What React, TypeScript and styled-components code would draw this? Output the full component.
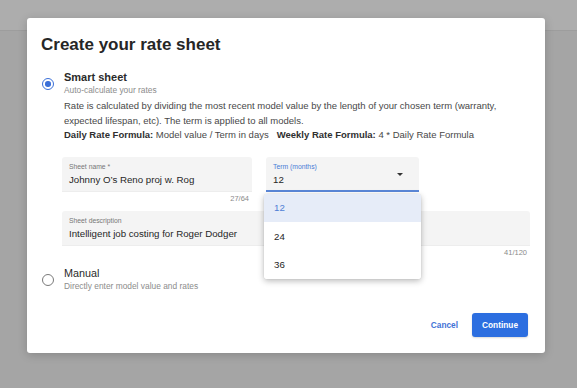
import React from "react";
import styled, { createGlobalStyle } from "styled-components";

const Global = createGlobalStyle`
  html, body { margin: 0; padding: 0; }
  body {
    width: 577px;
    height: 388px;
    overflow: hidden;
    background: #a5a5a5;
    font-family: "Liberation Sans", Arial, Helvetica, sans-serif;
  }
  * { box-sizing: border-box; }
`;

const Page = styled.div`
  position: relative;
  width: 577px;
  height: 388px;
  background: #a5a5a5;
`;

const AppBar = styled.div`
  height: 31px;
  background: #adadad;
  border-bottom: 1px solid #9d9d9d;
`;

const Overlay = styled.div`
  position: absolute;
  inset: 0;
  padding: 18px 32px 35px 27px;
  display: flex;
  align-items: flex-start;
`;

const Dialog = styled.div`
  width: 518px;
  height: 335px;
  background: #ffffff;
  border-radius: 3px;
  box-shadow: 0 2px 10px rgba(0, 0, 0, 0.18);
  padding: 16px 15px 16px 14px;
  display: flex;
  flex-direction: column;
  color: #2b2b2b;
`;

const Title = styled.h1`
  margin: 0;
  font-size: 17px;
  line-height: 22px;
  font-weight: bold;
  color: #262626;
`;

const Option = styled.section<{ $mt: number }>`
  margin-top: ${(p) => p.$mt}px;
  display: flex;
  flex-direction: column;
`;

const OptionHead = styled.div`
  display: flex;
  align-items: center;
  gap: 10px;
`;

const Radio = styled.span<{ $checked?: boolean }>`
  width: 12px;
  height: 12px;
  margin-left: 1px;
  border-radius: 50%;
  flex: none;
  border: 1.5px solid ${(p) => (p.$checked ? "#3a6fd8" : "#7a7a7a")};
  display: flex;
  align-items: center;
  justify-content: center;
  &::after {
    content: "";
    width: 5.5px;
    height: 5.5px;
    border-radius: 50%;
    background: ${(p) => (p.$checked ? "#3a6fd8" : "transparent")};
  }
`;

const HeadText = styled.div`
  display: flex;
  flex-direction: column;
`;

const OptionTitle = styled.div<{ $bold?: boolean }>`
  font-size: ${(p) => (p.$bold ? "11px" : "10.8px")};
  line-height: 13px;
  font-weight: ${(p) => (p.$bold ? "bold" : "normal")};
  color: #2a2a2a;
`;

const OptionSub = styled.div`
  font-size: 8.4px;
  line-height: 13px;
  color: #8c8c8c;
`;

const OptionBody = styled.div`
  margin-left: 21px;
  display: flex;
  flex-direction: column;
`;

const Paragraph = styled.p`
  margin: 2px 0 0;
  padding-left: 2px;
  font-size: 9.5px;
  line-height: 14.5px;
  color: #484848;
`;

const Formula = styled.div`
  padding-left: 2px;
  display: flex;
  gap: 8px;
  font-size: 9.5px;
  line-height: 14.5px;
  color: #484848;
  b {
    color: #2f2f2f;
    font-weight: bold;
  }
`;

const FieldRow = styled.div`
  margin-top: 14px;
  display: flex;
  gap: 14px;
  align-items: flex-start;
`;

const FieldWrap = styled.div<{ $w: number }>`
  width: ${(p) => p.$w}px;
  position: relative;
  display: flex;
  flex-direction: column;
`;

const Field = styled.div<{ $active?: boolean }>`
  height: 35px;
  background: #f4f4f4;
  border-radius: 3px 3px 0 0;
  border-bottom: ${(p) => (p.$active ? "2px solid #5b87d8" : "1px solid #ededed")};
  padding: 6px 7px 0;
  display: flex;
  flex-direction: column;
  position: relative;
`;

const FieldLabel = styled.div<{ $active?: boolean }>`
  font-size: 6.8px;
  line-height: 8px;
  color: ${(p) => (p.$active ? "#4a7bd6" : "#777")};
`;

const FieldValue = styled.div`
  font-size: 9.7px;
  line-height: 14px;
  margin-top: 2px;
  color: #262626;
`;

const Counter = styled.div`
  align-self: flex-end;
  padding-right: 3px;
  margin-top: 2px;
  font-size: 7.5px;
  line-height: 10px;
  color: #8a8a8a;
`;

const Arrow = styled.span`
  position: absolute;
  right: 16px;
  top: 16px;
  width: 0;
  height: 0;
  border-left: 3px solid transparent;
  border-right: 3px solid transparent;
  border-top: 3px solid #333;
`;

const Menu = styled.ul`
  position: absolute;
  left: -2px;
  top: 37px;
  width: 157px;
  margin: 0;
  padding: 0;
  list-style: none;
  background: #fff;
  border-radius: 3px;
  box-shadow: 0 2px 6px rgba(0, 0, 0, 0.28), 0 0 1px rgba(0, 0, 0, 0.2);
  overflow: hidden;
  z-index: 2;
`;

const MenuItem = styled.li<{ $selected?: boolean }>`
  height: 28.5px;
  display: flex;
  align-items: center;
  padding-left: 10px;
  font-size: 9.7px;
  color: ${(p) => (p.$selected ? "#4f7fd6" : "#262626")};
  background: ${(p) => (p.$selected ? "#e6ecf8" : "#fff")};
`;

const DescWrap = styled.div`
  margin-top: 7px;
  display: flex;
  flex-direction: column;
`;

const Footer = styled.div`
  margin-top: auto;
  display: flex;
  justify-content: flex-end;
  align-items: center;
  gap: 6px;
  padding-right: 2px;
`;

const Button = styled.button<{ $primary?: boolean }>`
  height: 24px;
  border: none;
  border-radius: 3px;
  padding: 0 ${(p) => (p.$primary ? "10px" : "8px")};
  min-width: ${(p) => (p.$primary ? "54px" : "auto")};
  font-family: "Liberation Sans", Arial, sans-serif;
  font-size: 8.3px;
  font-weight: bold;
  background: ${(p) => (p.$primary ? "#2c6ee0" : "transparent")};
  color: ${(p) => (p.$primary ? "#ffffff" : "#3f72d6")};
  box-shadow: ${(p) => (p.$primary ? "0 1px 2px rgba(0,0,0,0.15)" : "none")};
`;

export default function App() {
  return (
    <Page>
      <Global />
      <AppBar />
      <Overlay>
        <Dialog>
          <Title>Create your rate sheet</Title>

          <Option $mt={15}>
            <OptionHead>
              <Radio $checked />
              <HeadText>
                <OptionTitle $bold>Smart sheet</OptionTitle>
                <OptionSub>Auto-calculate your rates</OptionSub>
              </HeadText>
            </OptionHead>
            <OptionBody>
              <Paragraph>
                Rate is calculated by dividing the most recent model value by the length of your chosen term (warranty,
                expected lifespan, etc). The term is applied to all models.
              </Paragraph>
              <Formula>
                <span>
                  <b>Daily Rate Formula:</b> Model value / Term in days
                </span>
                <span>
                  <b>Weekly Rate Formula:</b> 4 * Daily Rate Formula
                </span>
              </Formula>

              <FieldRow>
                <FieldWrap $w={190}>
                  <Field>
                    <FieldLabel>Sheet name *</FieldLabel>
                    <FieldValue>Johnny O’s Reno proj w. Rog</FieldValue>
                  </Field>
                  <Counter>27/64</Counter>
                </FieldWrap>
                <FieldWrap $w={153}>
                  <Field $active>
                    <FieldLabel $active>Term (months)</FieldLabel>
                    <FieldValue>12</FieldValue>
                    <Arrow />
                  </Field>
                  <Menu>
                    <MenuItem $selected>12</MenuItem>
                    <MenuItem>24</MenuItem>
                    <MenuItem>36</MenuItem>
                  </Menu>
                </FieldWrap>
              </FieldRow>

              <DescWrap>
                <Field>
                  <FieldLabel>Sheet description</FieldLabel>
                  <FieldValue>Intelligent job costing for Roger Dodger</FieldValue>
                </Field>
                <Counter>41/120</Counter>
              </DescWrap>
            </OptionBody>
          </Option>

          <Option $mt={9}>
            <OptionHead>
              <Radio />
              <HeadText>
                <OptionTitle>Manual</OptionTitle>
                <OptionSub>Directly enter model value and rates</OptionSub>
              </HeadText>
            </OptionHead>
          </Option>

          <Footer>
            <Button>Cancel</Button>
            <Button $primary>Continue</Button>
          </Footer>
        </Dialog>
      </Overlay>
    </Page>
  );
}
